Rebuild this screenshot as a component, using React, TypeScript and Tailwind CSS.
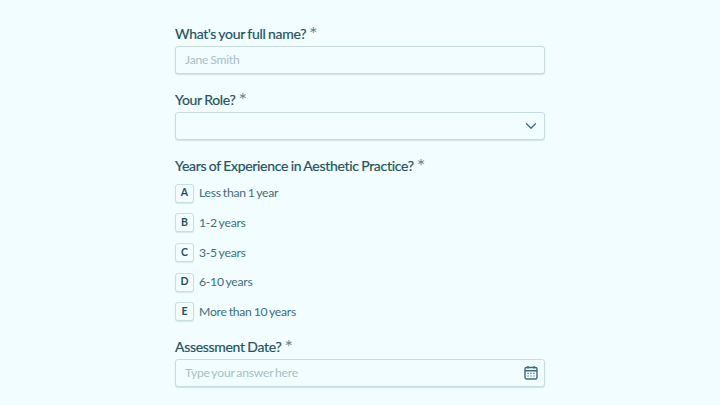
import { ChevronDown } from "lucide-react";

const font = { fontFamily: "Lato, sans-serif" };

function Label({ text }: { text: string }) {
  return (
    <div className="flex h-[20px] items-start text-[14px] leading-[20px] tracking-[-0.3px] [word-spacing:-0.7px] text-[#1f5263]">
      <span className="mt-[1px] [-webkit-text-stroke:0.2px_#1f5263]">{text}</span>
      <span className="ml-[3px] text-[20px] leading-[20px] text-[#5f8a94]">*</span>
    </div>
  );
}

function Option({ letter, text }: { letter: string; text: string }) {
  return (
    <div className="flex h-[20px] items-center gap-[5px]">
      <div className="flex h-[19px] w-[19px] items-center justify-center rounded-[3px] border border-[#c9dfe0] bg-[#f3fdfe] text-[10.5px] font-bold text-[#1f5263] shadow-[0_1px_1px_rgba(31,79,95,0.12)]">
        {letter}
      </div>
      <span className="mt-[1px] text-[12.2px] tracking-[-0.25px] [word-spacing:-0.9px] text-[#3f6f7c]">{text}</span>
    </div>
  );
}

function Field({ placeholder, children }: { placeholder?: string; children?: React.ReactNode }) {
  return (
    <div className="mt-[3px] flex h-[28px] items-center justify-between rounded-[3px] border border-[#c9dcdd] bg-[#f1fdfe] pl-[9px] pr-[6px] shadow-[0_1px_1px_rgba(31,79,95,0.15)]">
      <span className="mt-[1px] text-[12.2px] tracking-[-0.25px] [word-spacing:-0.9px] text-[#a9c0c6]">{placeholder}</span>
      {children}
    </div>
  );
}

export default function App() {
  return (
    <div className="flex h-[405px] w-[720px] justify-center overflow-hidden bg-[#f1fdfe]" style={font}>
      <div className="w-[370px] pt-[23px]">
        <Label text="What's your full name?" />
        <Field placeholder="Jane Smith" />

        <div className="mt-[15px]">
          <Label text="Your Role?" />
          <Field>
            <ChevronDown size={18} strokeWidth={1.7} className="-mr-[2px] text-[#3f6c7a]" />
          </Field>
        </div>

        <div className="mt-[15px]">
          <Label text="Years of Experience in Aesthetic Practice?" />
          <div className="mt-[8px] flex flex-col gap-[9.7px]">
            <Option letter="A" text="Less than 1 year" />
            <Option letter="B" text="1-2 years" />
            <Option letter="C" text="3-5 years" />
            <Option letter="D" text="6-10 years" />
            <Option letter="E" text="More than 10 years" />
          </div>
        </div>

        <div className="mt-[14px]">
          <Label text="Assessment Date?" />
          <Field placeholder="Type your answer here">
            <svg width="14" height="15" viewBox="0 0 14 15" fill="none" stroke="#3f6c7a" strokeWidth="1.4">
              <rect x="1" y="2.5" width="12" height="11.5" rx="1.5" />
              <path d="M1 5.8h12M4 1v2.5M10 1v2.5" />
              <path d="M3.5 8.3h1.2M6.4 8.3h1.2M9.3 8.3h1.2M3.5 11h1.2M6.4 11h1.2M9.3 11h1.2" strokeWidth="1.2" />
            </svg>
          </Field>
        </div>
      </div>
    </div>
  );
}
